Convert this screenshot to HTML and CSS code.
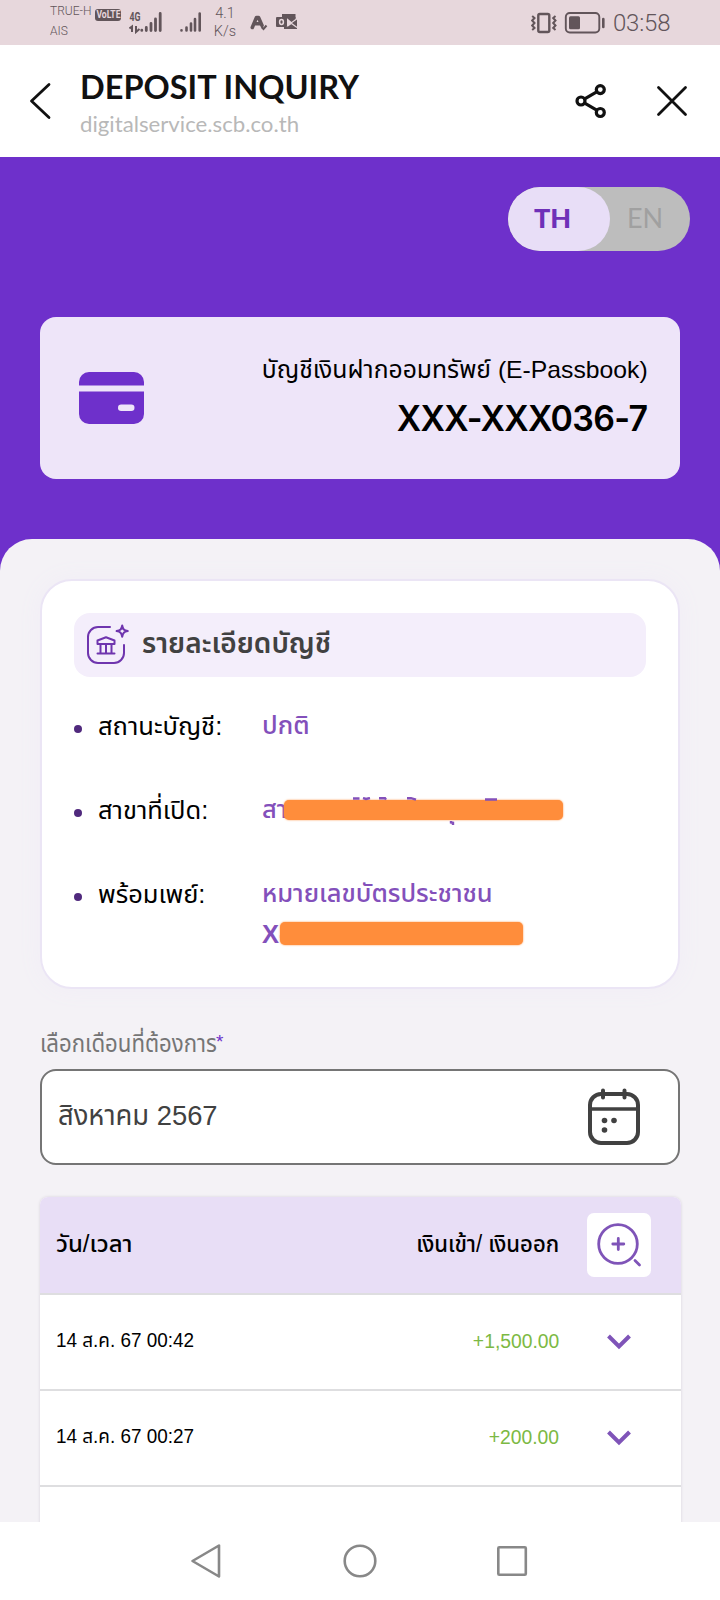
FILE: index.html
```html
<!DOCTYPE html>
<html lang="th">
<head>
<meta charset="utf-8">
<title>Deposit Inquiry</title>
<link rel="stylesheet" href="styles.css">
</head>
<body>
<div class="screen">
  <div class="status">
    <div class="carrier"><span>TRUE-H</span><span>AIS</span></div>
    <span class="volte"><span>VoLTE</span></span>
    <svg class="signal" width="34" height="24" viewBox="0 0 34 24">
      <text class="net" x="0.500" y="10.500" textLength="11" lengthAdjust="spacingAndGlyphs">4G</text>
      <path d="M.5 18.500L3 16.500V22M7 16v6l3.500-3" fill="none" stroke="#62555a" stroke-width="2"/>
      <path d="M12.800 20.200v.2M17.300 17.500v3M22 13.500v7M26.500 9v11.500M31.200 3.500v17" stroke="#62555a" stroke-width="2.800" stroke-linecap="round"/>
    </svg>
    <svg class="signal second" width="24" height="24" viewBox="0 0 24 24">
      <path d="M2.500 20.200v.2M7.500 17.500v3M12 13.500v7M16 9v11.500M20.700 3.500v17" stroke="#62555a" stroke-width="2.600" stroke-linecap="round"/>
    </svg>
    <div class="speed"><span>4.1</span><span>K/s</span></div>
    <svg class="app-a" width="18" height="16" viewBox="0 0 18 16"><path d="M2.300 12.500L6.500 2.500h2L12 10.500M5 8.800h5" fill="none" stroke="#62555a" stroke-width="3.600" stroke-linejoin="round" stroke-linecap="round"/><path d="M11.500 12l2 2 3-3.500" fill="none" stroke="#62555a" stroke-width="2"/></svg>
    <svg class="mail" width="22" height="18" viewBox="0 0 22 18"><rect x="6" y="1" width="13.500" height="4.500" fill="#62555a"/><path d="M11 4h8.500v2L15.500 9 12 6zM21 6.500V16H8v-2.500h4L15.500 11zM21 6.500v9.500l-5-6z" fill="#62555a"/><rect y="4" width="11" height="10" rx="1" fill="#62555a"/><ellipse cx="5.500" cy="9" rx="1.900" ry="2.500" fill="none" stroke="#e7d7dc" stroke-width="1.500"/><path d="M15.500 10.500l5.500 4" stroke="#e7d7dc" stroke-width="1.200"/></svg>
    <svg class="vibrate" width="26" height="24" viewBox="0 0 26 24"><rect x="7.300" y="3" width="11" height="18" rx="1.500" fill="none" stroke="#62555a" stroke-width="2.400"/><path d="M1.200 5l2.300 2-2.300 2.500L3.500 12l-2.300 2.500L3.500 17l-2.300 2M24.500 5l-2.300 2 2.300 2.500-2.300 2.500 2.300 2.500-2.300 2.500 2.300 2" fill="none" stroke="#62555a" stroke-width="2"/></svg>
    <svg class="battery" width="42" height="24" viewBox="0 0 42 24"><rect x="1.800" y="2" width="33.500" height="19.500" rx="4" fill="none" stroke="#62555a" stroke-width="1.900"/><rect x="5" y="5.200" width="11" height="13" rx="1.500" fill="#62555a"/><path d="M39.300 8v8" stroke="#62555a" stroke-width="2.600" stroke-linecap="round"/></svg>
    <span class="clock">03:58</span>
  </div>

  <header class="titlebar">
    <svg class="back" width="22" height="38" viewBox="0 0 22 38"><path d="M20 2.500L2.500 19 20 35.500" fill="none" stroke="#111" stroke-width="2.800" stroke-linecap="round" stroke-linejoin="round"/></svg>
    <div class="titles"><h1><span class="fit title">DEPOSIT INQUIRY</span></h1><p><span class="fit host">digitalservice.scb.co.th</span></p></div>
    <svg class="share" width="32" height="36" viewBox="0 0 32 36"><g fill="none" stroke="#111" stroke-width="3.200"><circle cx="6" cy="18" r="4"/><circle cx="25.300" cy="6.600" r="4"/><circle cx="25.300" cy="29.500" r="4"/><path d="M9.700 15.800l12-7M9.700 20.200l12 7"/></g></svg>
    <svg class="close" width="32" height="32" viewBox="0 0 32 32"><path d="M2.500 2.500l27 27M29.500 2.500l-27 27" stroke="#111" stroke-width="2.800" stroke-linecap="round"/></svg>
  </header>

  <section class="hero">
    <div class="lang"><span class="th">TH</span><span class="en">EN</span></div>
    <div class="account">
      <svg width="66" height="53" viewBox="0 0 66 53"><path d="M0 13.500V10A10 10 0 0 1 10 0h45a10 10 0 0 1 10 10v3.500zM0 19.500h65V42a10 10 0 0 1-10 10H10A10 10 0 0 1 0 42z" fill="#6e30cb"/><rect x="39" y="32.500" width="16.500" height="6.500" rx="3.200" fill="#eee5f9"/></svg>
      <div class="account-text">
        <p class="kind"><span class="fit">บัญชีเงินฝากออมทรัพย์ (E-Passbook)</span></p>
        <p class="number"><span class="fit">XXX-XXX036-7</span></p>
      </div>
    </div>
  </section>

  <main class="sheet">
    <section class="details">
      <h2><svg width="44" height="42" viewBox="0 0 44 42"><g fill="none" stroke="#6f35ae" stroke-width="2" stroke-linecap="round" stroke-linejoin="round"><path d="M24 3H12A10 10 0 0 0 2 13v16a10 10 0 0 0 10 10h16a10 10 0 0 0 10-10v-8"/><path d="M36.200 1.500c.8 4 1.600 4.800 5.600 5.600-4 .8-4.800 1.600-5.600 5.600-.8-4-1.600-4.800-5.600-5.600 4-.8 4.800-1.600 5.600-5.600z"/><path d="M11.500 16.500l8.500-3.200 8.500 3.200v3.500h-17zM14.500 21v8M20 21v8M25.500 21v8M11.500 29.500h17"/></g></svg><span class="fit head">รายละเอียดบัญชี</span></h2>
      <ul>
        <li><span class="label"><span class="fit">สถานะบัญชี:</span></span><span class="value"><span class="fit">ปกติ</span></span></li>
        <li><span class="label"><span class="fit">สาขาที่เปิด:</span></span><span class="value"><span class="fit">สา</span><i class="mask m1"></i>
          <svg class="marks" width="160" height="28" viewBox="0 0 160 28"><path d="M0 1.500h6.500M10 1l3 1 4-1M26 1.200h6l1 1.500M54 1.200h4l5 1.500M132 2.500h12M98 24v1.500l2 .3v3" fill="none" stroke="#8350bb" stroke-width="2.400"/></svg></span></li>
        <li><span class="label"><span class="fit">พร้อมเพย์:</span></span><span class="value"><span class="fit v3">หมายเลขบัตรประชาชน</span><br><span class="fit x">X-</span><i class="mask m2"></i></span></li>
      </ul>
    </section>

    <label class="month-label"><span class="fit ml">เลือกเดือนที่ต้องการ</span><b>*</b></label>
    <div class="month"><span class="fit mv">สิงหาคม 2567</span>
      <svg width="54" height="60" viewBox="0 0 54 60"><g fill="none" stroke="#414141" stroke-width="4" stroke-linecap="round"><rect x="3" y="7" width="48" height="49" rx="11"/><path d="M3 22h48" stroke-width="3.500"/><path d="M16 3.500v7M37.500 3.500v7"/></g><g fill="#414141"><circle cx="17.500" cy="33.500" r="2.800"/><circle cx="27" cy="33.500" r="2.800"/><circle cx="17.500" cy="43" r="2.800"/></g></svg>
    </div>

    <section class="table">
      <div class="row head-row"><span class="date"><span class="fit h1t">วัน/เวลา</span></span><span class="amount"><span class="fit h2t">เงินเข้า/ เงินออก</span></span>
        <span class="zoom-btn"><svg width="46" height="46" viewBox="0 0 46 46"><g fill="none" stroke="#7f54b8" stroke-width="2.800" stroke-linecap="round"><circle cx="22" cy="22" r="19.300"/><path d="M22.300 16.500v11M16.800 22h11M39 38.500l4.500 4.500"/></g></svg></span></div>
      <div class="row"><span class="date"><span class="fit d1">14 ส.ค. 67 00:42</span></span><span class="amount plus"><span class="fit">+1,500.00</span></span><svg class="chev" width="26" height="16" viewBox="0 0 26 16"><path d="M2.500 2L13 12.500 23.500 2" fill="none" stroke="#7f54b8" stroke-width="4"/></svg></div>
      <div class="row"><span class="date"><span class="fit d1">14 ส.ค. 67 00:27</span></span><span class="amount plus"><span class="fit">+200.00</span></span><svg class="chev" width="26" height="16" viewBox="0 0 26 16"><path d="M2.500 2L13 12.500 23.500 2" fill="none" stroke="#7f54b8" stroke-width="4"/></svg></div>
      <div class="row last"></div>
    </section>
  </main>

  <nav class="navbar">
    <svg width="36" height="36" viewBox="0 0 36 36"><path d="M29 2.500v31L2.500 18z" fill="none" stroke="#888" stroke-width="2.600" stroke-linejoin="round"/></svg>
    <svg width="36" height="36" viewBox="0 0 36 36"><circle cx="18" cy="18" r="15.300" fill="none" stroke="#888" stroke-width="2.600"/></svg>
    <svg width="36" height="36" viewBox="0 0 36 36"><rect x="4.300" y="4.300" width="27.500" height="27.500" rx="1" fill="none" stroke="#888" stroke-width="2.600"/></svg>
  </nav>
</div>
</body>
</html>
```
FILE: styles.css
```css
* { box-sizing: border-box; margin: 0; padding: 0; }
body { width: 720px; height: 1600px; overflow: hidden; background: #fff; font-family: "Liberation Sans", "Noto Sans Thai", sans-serif; }
.screen { width: 720px; height: 1600px; display: flex; flex-direction: column; overflow: hidden; }
svg { display: block; flex: none; }
.fit { display: inline-block; white-space: nowrap; transform-origin: left center; }

.status { height: 45px; flex: none; background: #e7d7dc; color: #62555a; display: flex; align-items: flex-start; padding-left: 50px; font-family: Roboto, sans-serif; }
.carrier { width: 44px; display: flex; flex-direction: column; font-size: 12px; line-height: 20px; padding-top: 1px; font-weight: 300; white-space: nowrap; }
.volte { margin: 9px 0 0 1px; width: 26px; height: 12px; background: #62555a; color: #e7d7dc; border-radius: 3px; font-size: 11px; font-weight: 700; line-height: 12.500px; display: flex; justify-content: center; }
.volte span { transform: scaleX(.78); }
.signal { margin: 10px 0 0 8px; }
.second { margin-left: 16px; }
.net { font: 700 12px Roboto, sans-serif; fill: #62555a; }
.speed { width: 30px; margin-left: 7px; display: flex; flex-direction: column; align-items: center; font-size: 14.500px; line-height: 18px; padding-top: 5px; font-weight: 300; }
.app-a { margin: 15px 0 0 10px; }
.mail { margin: 13px 0 0 8px; }
.vibrate { margin: 11px 0 0 233px; }
.battery { margin: 11px 0 0 7px; }
.clock { margin: 8px 0 0 7px; font-size: 24px; line-height: 30px; font-weight: 300; letter-spacing: -.2px; }

.titlebar { height: 112px; flex: none; display: flex; align-items: flex-start; padding: 0 32px 0 29px; color: #111; }
.back { margin-top: 37px; }
.titles { flex: 1; margin: 21px 0 0 29px; }
.titles h1 { font: 700 32px/42px Lato, sans-serif; }
.titles p { font: 400 22px/32px Lato, sans-serif; color: #b8b8b8; }
.title { transform: scaleX(1.015); }
.host { transform: scaleX(1.01); }
.share { margin-top: 38px; }
.close { margin: 40px 0 0 49px; }

.hero { height: 414px; flex: none; background: #6e30cb; padding: 30px 40px 0; }
.lang { width: 182px; height: 64px; margin: 0 -10px 0 auto; border-radius: 32px; background: #bdbdbd; display: flex; font: 400 27px/62px Lato, sans-serif; overflow: hidden; }
.th { width: 102px; background: #e8def7; color: #6e30b8; font-weight: 900; border-radius: 32px; padding-left: 26px; }
.en { color: #a0a0a0; padding-left: 17px; }
.account { height: 162px; margin-top: 66px; background: #eee5f9; border-radius: 16px; display: flex; justify-content: space-between; padding: 32px 32px 0 39px; }
.account svg { margin-top: 23px; }
.account-text { text-align: right; color: #000; }
.kind { font-size: 24px; line-height: 42px; }
.number { font: 600 35px/54px Inter, sans-serif; }
.kind .fit, .number .fit { transform-origin: right center; }
.kind .fit { transform: scaleX(1.03); }
.number .fit { letter-spacing: -.7px; transform: translateX(-1px) scaleX(.97); }

.sheet { height: 983px; flex: none; margin-top: -32px; border-radius: 32px 32px 0 0; background: #f4f2f6; padding: 40px 40px 0; overflow: hidden; }
.details { height: 410px; border: 2px solid #ebe5f5; border-radius: 32px; background: #fff; padding: 32px; box-shadow: 0 0 24px #f1edf6; }
.details h2 { height: 64px; border-radius: 16px; background: #f4eefb; color: #414141; display: flex; align-items: center; gap: 12px; padding-left: 12px; font-size: 28px; font-weight: 600; }
.head { margin-top: -2px; }
.details ul { list-style: none; padding-top: 30px; }
.details li { height: 84px; display: flex; position: relative; font-size: 25.500px; line-height: 41px; }
.details li::before { content: ""; width: 8px; height: 8px; border-radius: 50%; background: #50297d; margin: 18px 16px 0 0; }
.label { width: 164px; color: #000; margin-top: -1px; }
.value { color: #8350bb; position: relative; white-space: nowrap; font-weight: 500; margin-top: -2px; }
.x { font-weight: 600; }
.mask { position: absolute; background: #ff8d3b; border-radius: 5px; box-shadow: 0 0 2px #ff8d3b; }
.m1 { left: 22px; top: 11px; width: 279px; height: 20px; }
.m2 { left: 18px; top: 49px; width: 243px; height: 23px; }
.marks { position: absolute; left: 91px; top: 8px; }

.month-label { display: flex; height: 45px; margin-top: 35px; font-size: 24px; line-height: 40px; color: #757575; }
.ml { width: 176px; transform: scaleX(.925); }
.month-label b { color: #6e30cb; font-size: 19px; font-weight: 400; line-height: 36px; }
.month { height: 96px; border: 2px solid #757575; border-radius: 16px; background: #fff; display: flex; justify-content: space-between; align-items: center; padding: 0 37px 0 16px; font-size: 28.500px; color: #414141; }
.mv { margin-top: -1px; transform: scaleX(.96); }
.table { width: 641px; margin: 32px -1px 0 -.5px; border-radius: 8px 8px 0 0; background: #fff; box-shadow: 0 0 3px #d5d1da; }
.row { height: 96px; border-bottom: 2px solid #dedee0; display: flex; align-items: center; padding-left: 16.500px; font-size: 19.500px; color: #000; }
.head-row { height: 98px; background: #e8def6; border-radius: 8px 8px 0 0; font-size: 23.500px; font-weight: 500; }
.date { width: 240px; }
.amount { width: 263px; text-align: right; }
.amount .fit { transform-origin: right center; }
.d1 { transform: translateY(-1px) scaleX(.97); }
.h1t { transform: scaleX(1.02); }
.h2t { transform: scaleX(.94); }
.plus { color: #7cb943; }
.plus .fit { transform: translateY(-1px) scaleX(.99); }
.zoom-btn { width: 64px; height: 64px; margin-left: 28px; background: #fff; border-radius: 7px; display: grid; place-items: center; }
.chev { margin-left: 47px; }
.last { border: 0; }

.navbar { height: 78px; flex: none; display: flex; justify-content: center; gap: 116px; padding-top: 21px; background: #fff; }
```
